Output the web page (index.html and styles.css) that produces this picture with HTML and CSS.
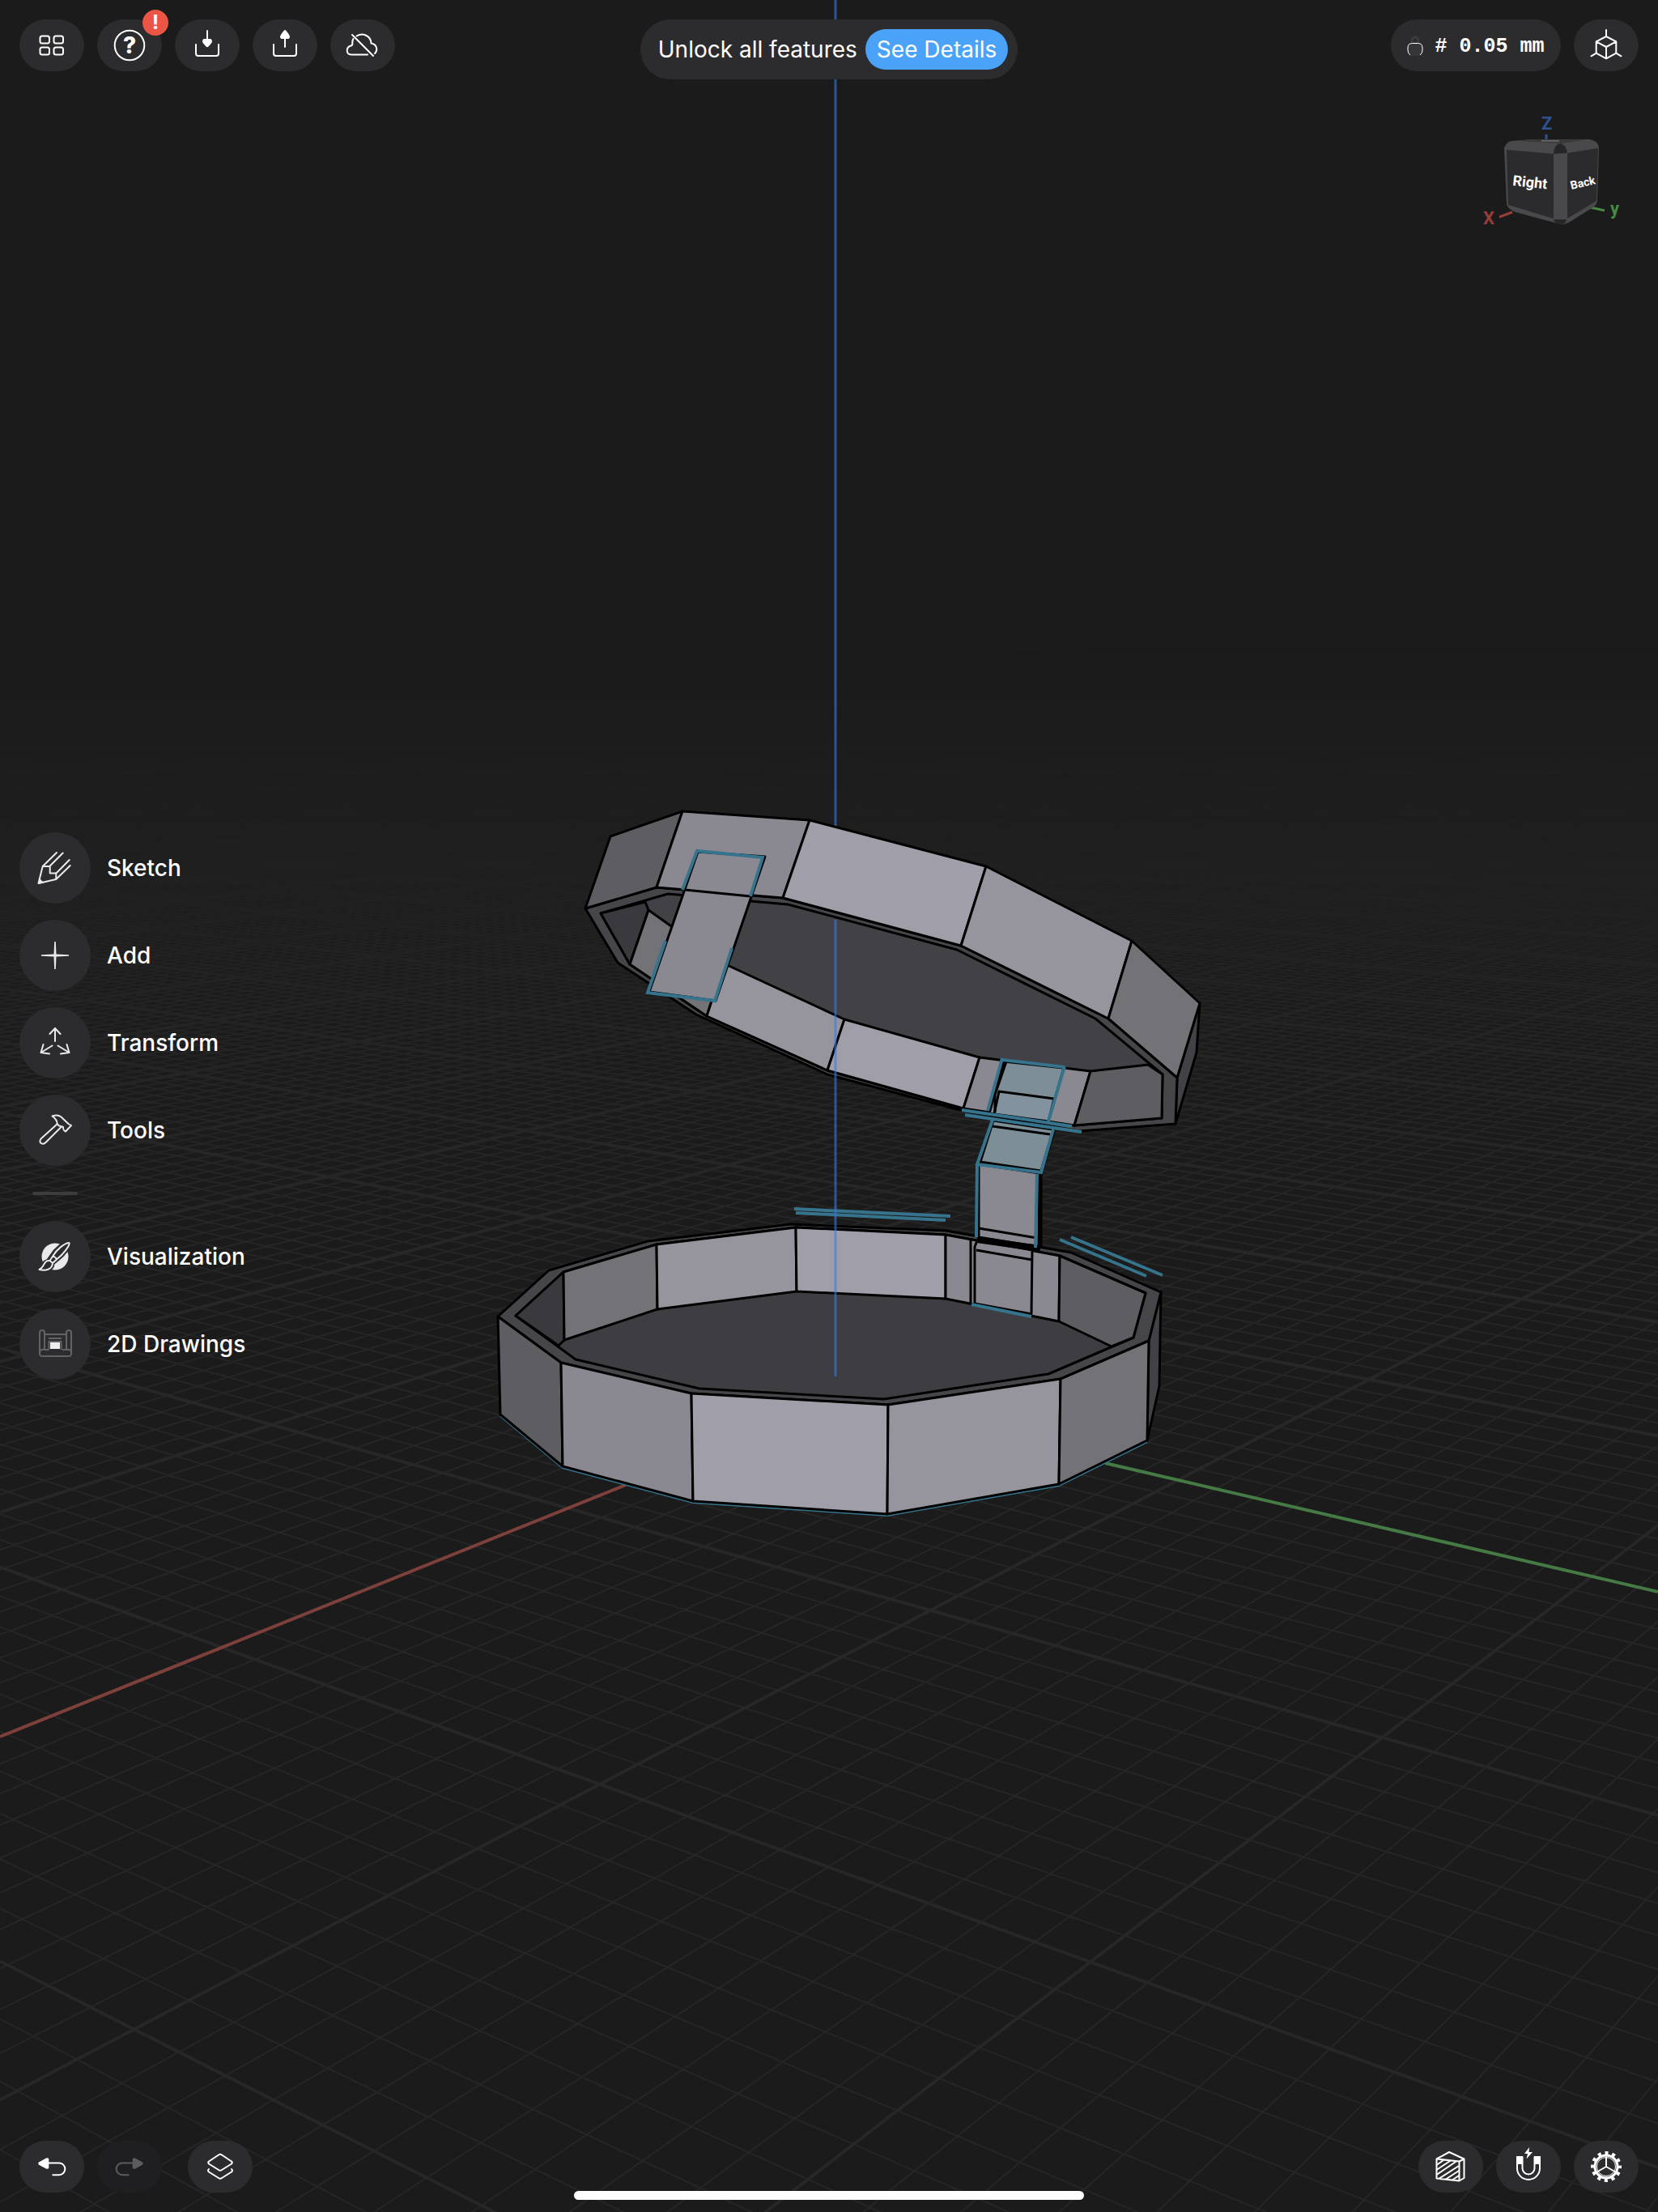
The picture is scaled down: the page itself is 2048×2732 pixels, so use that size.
FILE: index.html
```html
<!DOCTYPE html>
<html lang="en">
<head>
<meta charset="utf-8">
<meta name="viewport" content="width=device-width, initial-scale=1">
<title>3D Modeling Workspace</title>
<link rel="stylesheet" href="styles.css">
</head>
<body>
<main class="workspace">
  <svg class="scene" viewBox="0 0 2048 2732" preserveAspectRatio="xMidYMid slice" role="img" aria-label="Model viewport">
    <defs>
      <linearGradient id="haze" gradientUnits="userSpaceOnUse" x1="0" y1="800" x2="0" y2="1500">
        <stop offset="0" stop-color="#fff" stop-opacity="0"/>
        <stop offset="0.3" stop-color="#fff" stop-opacity=".3"/>
        <stop offset="0.7" stop-color="#fff" stop-opacity=".8"/>
        <stop offset="1" stop-color="#fff"/>
      </linearGradient>
      <mask id="fade" maskUnits="userSpaceOnUse" x="0" y="0" width="2048" height="2732"><rect y="800" width="2048" height="1932" fill="url(#haze)"/></mask>
    </defs>
    <g mask="url(#fade)">
      <path id="grid-minor" class="grid-minor"/>
      <path id="grid-major" class="grid-major"/>
    </g>
    <path class="axis-x" d="M0 2145 773 1834"/>
    <path class="axis-y" d="M1365 1807 2048 1966"/>
    <path class="axis-z" d="M1032 0V1021"/>

    <!-- lid -->
    <g class="edge">
      <path class="f1" d="M1482 1239 1478 1300 1452 1388 1454 1331z"/>
      <path class="rim" d="M723 1122 811 1096 967 1109 1187 1168 1369 1258 1454 1331 1452 1388 1333 1397 1190 1372 1022 1327 860 1253 763 1189z"/>
      <path class="f1" d="M742 1128 825 1104 973 1117 1182 1173 1353 1258 1436 1327 1435 1381 1327 1390 1190 1369 1022 1322 873 1255 778 1191z"/>
      <path class="f0" d="M742 1128 797 1114 801 1124 778 1191z"/>
      <path class="f3" d="M801 1124 894 1190 873 1255 778 1191z"/>
      <path class="f5" d="M894 1190 1043 1259 1022 1322 873 1255z"/>
      <path class="f6" d="M1043 1259 1210 1306 1190 1369 1022 1322z"/>
      <path class="f4" d="M1210 1306 1347 1323 1327 1390 1190 1369z"/>
      <path class="f2" d="M1347 1323 1418 1315 1436 1327 1435 1381 1327 1390z"/>
      <path class="f2" d="M754 1033 843 1002 811 1096 723 1122z"/>
      <path class="f4" d="M843 1002 1000 1013 967 1109 811 1096z"/>
      <path class="f6" d="M1000 1013 1218 1070 1187 1168 967 1109z"/>
      <path class="f5" d="M1218 1070 1398 1162 1369 1258 1187 1168z"/>
      <path class="f3" d="M1398 1162 1482 1239 1454 1331 1369 1258z"/>
      <path class="f4" d="M862 1052 945 1058 884 1236 802 1225z"/>
      <path class="line" d="M846 1099 927 1107"/>
    </g>
    <path class="sketch" d="M843 1099 861 1051 942 1059 927 1107M822 1162 800 1226 883 1236 904 1171"/>

    <!-- base -->
    <path class="sketch-thin" d="M618 1749 695 1813 856 1856 1096 1872 1308 1835 1417 1781"/>
    <g class="edge">
      <path class="f1" d="M1434 1596 1432 1712 1417 1779 1419 1656z"/>
      <path class="rim" d="M615 1626 678 1569 800 1533 977 1512 1168 1520 1323 1547 1434 1596 1419 1656 1311 1703 1097 1735 854 1721 693 1683z"/>
      <path class="floor" d="M637 1625 696 1571 811 1537 983 1516 1168 1525 1309 1551 1415 1597 1400 1652 1295 1697 1092 1728 864 1715 711 1679z"/>
      <path class="f0" d="M637 1625 696 1571 697 1655 690 1662z"/>
      <path class="f3" d="M696 1571 811 1537 812 1617 697 1655z"/>
      <path class="f5" d="M811 1537 983 1516 984 1595 812 1617z"/>
      <path class="f6" d="M983 1516 1168 1525 1168 1604 984 1595z"/>
      <path class="f4" d="M1168 1525 1309 1551 1308 1632 1168 1604z"/>
      <path class="f2" d="M1309 1551 1415 1597 1400 1652 1373 1663 1308 1632z"/>
      <path class="f2" d="M615 1626 693 1683 695 1811 618 1747z"/>
      <path class="f4" d="M693 1683 854 1721 856 1854 695 1811z"/>
      <path class="f6" d="M854 1721 1097 1735 1096 1870 856 1854z"/>
      <path class="f5" d="M1097 1735 1310 1703 1308 1833 1096 1870z"/>
      <path class="f3" d="M1310 1703 1419 1656 1417 1779 1308 1833z"/>
    </g>

    <!-- hinge strap -->
    <g class="edge">
      <path class="line" d="M1199 1530V1611"/>
      <path class="f4" d="M1207 1532 1275 1544 1274 1623 1204 1610 1204 1540z"/>
      <path class="line" d="M1206 1544 1275 1556"/>
      <path class="f4" d="M1209 1438 1284 1449 1283 1540 1209 1528z"/>
      <path class="line" d="M1209 1517 1281 1529"/>
      <path class="strap-shadow" d="M1207 1531 1285 1542"/>
      <path class="strap-side" d="M1285 1448V1541"/>
      <path class="strap-a" d="M1240 1311 1314 1319 1295 1385 1222 1375z"/>
      <path class="strap-b" d="M1234 1348 1302 1357 1295 1385 1228 1376z"/>
      <path class="line" d="M1243 1311 1229 1352V1374"/>
      <path class="strap-a" d="M1227 1384 1301 1395 1286 1446 1211 1435z"/>
      <path class="line" d="M1226 1391 1297 1401M1303 1395 1287 1447"/>
    </g>
    <path class="sketch" d="M1238 1307 1220 1372M1238 1309 1315 1318M1315 1317 1295 1385M1188 1371 1324 1391M1192 1377 1336 1398M1226 1383 1207 1438 1286 1448 1301 1395M1207 1438 1206 1528M1281 1450 1279 1541M1200 1611 1274 1626M981 1493 1174 1502M983 1498 1168 1507M1323 1528 1436 1575M1309 1531 1416 1576"/>
    <path class="axis-z" d="M1032 1136V1700"/>
  </svg>

  <header class="bar top">
    <nav class="group" aria-label="Project">
      <button class="key" aria-label="Projects"><svg viewBox="0 0 80 64"><g class="ico"><rect x="25.500" y="20.500" width="11.500" height="9" rx="2.500"/><rect x="42.500" y="20.500" width="11.500" height="9" rx="2.500"/><rect x="25.500" y="34.500" width="11.500" height="9" rx="2.500"/><rect x="42.500" y="34.500" width="11.500" height="9" rx="2.500"/></g></svg></button>
      <button class="key" aria-label="Help"><svg viewBox="0 0 80 64"><circle class="ico" cx="40" cy="32" r="18.300"/><text class="help" x="40" y="42" text-anchor="middle">?</text></svg><span class="badge">!</span></button>
      <button class="key" aria-label="Import"><svg viewBox="0 0 80 64"><path class="ico" d="M26 31v11q0 3 3 3h22q3 0 3-3V31M40 14v12"/><path class="solid" d="M35.500 24h9q3 3 0 6l-3 3.500q-1.500 1.500-3 0l-3-3.500q-3-3 0-6z"/></svg></button>
      <button class="key" aria-label="Export"><svg viewBox="0 0 80 64"><path class="ico" d="M26 31v11q0 3 3 3h22q3 0 3-3V31M40 34V22"/><path class="solid" d="M35.500 24q-3-2 0-6l3-4q1.500-2 3 0l3 4q3 4 0 6z"/></svg></button>
      <button class="key" aria-label="Offline"><svg viewBox="0 0 80 64"><path class="ico" d="M27 19 53 45M46 43.500H26c-6.500 0-7.500-9-.5-11 2-.5 2-2 1.800-4q0-2.500 1-4.500M32.500 20.500C40 16 50 20 50.500 29.500c7 1 8.500 8 4.500 12.500"/></svg></button>
    </nav>
    <section class="banner"><span>Unlock all features</span><button class="cta">See Details</button></section>
    <nav class="group end" aria-label="View">
      <button class="key snap"><svg class="lock" viewBox="0 0 20 26"><circle cx="10" cy="6" r="4" fill="none" stroke="#3c3c3e" stroke-width="3"/><rect x=".5" y="9" width="19" height="16" rx="6" fill="#363638"/><path d="M4 24Q1 22 1 18v-3q0-5.500 5.500-5.500h7Q19 9.500 19 15v3q0 4-3 6" fill="none" stroke="#fff"/></svg># 0.05 mm</button>
      <button class="key" aria-label="Orientation"><svg viewBox="0 0 80 64"><path class="ico" d="M40 21 52.300 27.300V41.700L40 48.300 27.700 41.700V27.300zM27.700 27.300 40 34l12.300-6.700M40 34V48M40 21V13M27.700 41.700 21.500 45.300M52.300 41.700 58.500 45.300"/></svg></button>
    </nav>
  </header>

  <div class="middle">
    <nav class="tools" aria-label="Tools">
      <button class="tool"><span class="disc"><svg viewBox="0 0 88 88"><path class="ico" d="M46 25 28.700 42 23.500 63 45.300 58 62.700 41M53.700 25.500 37.700 41.500V50.500H45.500L61.700 34M28.700 42h9M45.300 58V50"/><path class="solid" d="M23 64l2-9q1 5 6 7z"/></svg></span>Sketch</button>
      <button class="tool"><span class="disc"><svg viewBox="0 0 88 88"><path class="solid" d="M43.200 27h1.600l.7 15.500L61 43.200v1.600l-15.500.7L44.800 61h-1.600l-.7-15.500L27 44.800v-1.600l15.500-.7z"/></svg></span>Add</button>
      <button class="tool"><span class="disc"><svg viewBox="0 0 88 88"><path class="ico" d="M44 42V26M37.500 33 44 26l6.500 7M40.500 47.500 26.500 56M29.500 46l-3 10 10.500 1.500M47.500 47.500 61.500 56M58.500 46l3 10L51 57.500"/></svg></span>Transform</button>
      <button class="tool"><span class="disc"><svg viewBox="0 0 88 88"><path class="ico" d="M47 36 26.500 54.500c-2 3-1 5 .5 5.500 2 1.500 4 .5 5.500-1L51.500 40M40.500 26.500c4-1.500 8-1.500 11 1L60.500 36l3.500 2-7 7.500c-3-1.500-3-3-3-5.500q-3-1.500-5-1.500L46.500 36q.5-5-6-9.500z"/></svg></span>Tools</button>
      <hr class="rule">
      <button class="tool"><span class="disc"><svg viewBox="0 0 88 88"><circle cx="44" cy="44" r="16.500" fill="#e9e9eb"/><path d="M61.500 27c1 3-7 14-15 20l-6 5c0 8-8 10-16 8 4-1 4-9 11-10l5-7c4-7 15-17 21-16z" fill="#2c2c2e" stroke="#2c2c2e" stroke-width="6"/><path class="ico" d="M61.500 27c1 3-7 14-15 20l-5-4c4-7 14-16 20-16zM41.500 43l-4 6 3.500 3 5.500-5M37.500 49c-8-1-6 8-13 11 8 2 16 0 16.500-8"/></svg></span>Visualization</button>
      <button class="tool"><span class="disc"><svg viewBox="0 0 88 88"><path d="M31 51V30q0-3-3-3t-3 3V56q0 3 4 3H60q4 0 4-3V30q0-3-3-3t-3 3V51M31 32H57M31 51q-6-1-6 4M58 51q6-1 6 4M31 51h5M58 51h-5M36 37H52M36.500 51V41h15V51" fill="none" stroke="#626265" stroke-width="2"/><path d="M38 42H50v8H38z" fill="#eee"/></svg></span>2D Drawings</button>
    </nav>
    <svg class="cube" viewBox="0 0 190 144" role="img" aria-label="View cube: Right, Back">
      <path d="M36 122 20 128" stroke="#963d39" stroke-width="3"/><path d="M132 116 150 120" stroke="#44893f" stroke-width="3"/><path d="M78 26v8" stroke="#2c5291" stroke-width="3"/>
      <path d="M26 43Q29 34 37 34L60 32H131Q143 34 143 43L141 109Q140 113 136 116L107 134Q99 139 92 136L40 122Q30 118 29 112z" fill="#49494b"/>
      <path d="M42 34 62 32H130L98 37z" fill="#39393b"/><path d="M72 34H94" stroke="#8a8a8a" stroke-width="1"/>
      <path d="M29 45 87 50V130L31 113zM104 49 142 43 140 108 104 130z" fill="#2b2b2d"/>
      <path d="M87 50Q88 38 95 37 102 38 104 49zM87 131H103Q102 137 95 137 88 136 87 131z" fill="#262628"/>
      <text class="face" x="36" y="89" transform="rotate(6 36 89)">Right</text>
      <text class="face small" x="109" y="94" transform="rotate(-13 109 94)">Back</text>
      <text class="mark" x="0" y="137" fill="#963d39">X</text><text class="mark" x="72" y="20" fill="#2c5291">Z</text><text class="mark" x="157" y="125" fill="#44893f">y</text>
    </svg>
  </div>

  <footer class="bar bottom">
    <nav class="group" aria-label="History">
      <button class="key" aria-label="Undo"><svg viewBox="0 0 80 64"><path class="ico" d="M35 27.500H49a7.300 7.300 0 0 1 0 14.700H41.300"/><path class="solid" d="M24.500 26.200 33 21.500q3.300-1 3.300 1.500V33q0 2.500-3.300 1.500L24.500 30q-2.500-2 0-3.800z"/></svg></button>
      <button class="key off" aria-label="Redo" disabled><svg viewBox="0 0 80 64"><path class="ico" d="M45 27.500H31a7.300 7.300 0 0 0 0 14.700H38.700"/><path class="solid" d="M55.500 26.200 47 21.500q-3.300-1-3.300 1.500V33q0 2.500 3.300 1.500L55.500 30q2.500-2 0-3.800z"/></svg></button>
      <button class="key layers" aria-label="Items"><svg viewBox="0 0 80 64"><path class="ico" d="M38 17.500q2-1.500 4 0L54 25.500q1.500 1.500 0 3L42 36q-2 1.500-4 0L26 28.500q-1.500-1.500 0-3zM26 35q-2 1.500 0 3.500L38 46q2 1.500 4 0l12-7.500q2-2 0-3.500"/></svg></button>
    </nav>
    <nav class="group end" aria-label="Display">
      <button class="key" aria-label="Section view"><svg viewBox="0 0 80 64"><path class="ico" d="M22.500 22.500 38 14l18.500 8.500V46L50.500 49.500 22.500 46.500zM22.500 22.500 50.500 25.500V49.500M50.500 25.500 56.500 22.500M22.500 30 31 24M22.500 36 39 25M22.500 42 46 26M26 46.500 50 31M34 47.500 50 37M42 48.500 50 43"/></svg></button>
      <button class="key" aria-label="Snapping"><svg viewBox="0 0 80 64"><path class="ico" d="M26 20V34a14 14 0 0 0 28 0V20H47.500V34a7.500 7.500 0 0 1-15 0V20z"/><path class="solid" d="M25 19h8v10H25zM47 19h8v10H47zM41 8l-6 8h4l-1.500 6.500L45 14h-4.500z"/></svg></button>
      <button class="key" aria-label="Settings"><svg viewBox="0 0 80 64"><circle cx="40" cy="32" r="16.500" fill="none" stroke="#fff" stroke-width="5" stroke-dasharray="4 4.639" stroke-dashoffset="2"/><circle cx="40" cy="32" r="14" fill="none" stroke="#fff" stroke-width="3"/><circle cx="40" cy="32" r="11.500" fill="none" stroke="#fff"/><path class="ico" d="M40 32V20M40 32 29.500 38M40 32 50.500 38"/></svg></button>
    </nav>
  </footer>
  <div class="home"></div>
</main>
<script src="grid.js"></script>
</body>
</html>
```

FILE: grid.js
```js
// Ground plane: both line families run from their vanishing points on the horizon.
(function () {
  var horizon = 720, width = 2048;
  var minor = '', major = '';

  function add(n, d) {
    if (n % 10 === 0) { if (n !== 0) major += d; } else { minor += d; }
  }

  for (var n = -400; n <= 34; n++) {
    // parallel to the green axis
    var s = 1011 / (4388 - 79.83 * n);
    add(n, 'M0 ' + (horizon + s * 3356).toFixed(1) + 'L' + width + ' ' + (horizon + s * (3356 + width)).toFixed(1));
  }
  for (var m = -400; m <= 29; m++) {
    // parallel to the red axis
    var t = 1011 / (2529 - 60.74 * m);
    add(m, 'M0 ' + (horizon + t * 3561).toFixed(1) + 'L' + width + ' ' + (horizon + t * (3561 - width)).toFixed(1));
  }
  document.getElementById('grid-minor').setAttribute('d', minor);
  document.getElementById('grid-major').setAttribute('d', major);
})();
```

FILE: styles.css
```css
* { box-sizing: border-box; }

body {
  margin: 0;
  background: #1b1b1b;
  color: #fff;
  font-family: Inter, "Liberation Sans", sans-serif;
  font-size: 28px;
}

button {
  margin: 0;
  padding: 0;
  border: 0;
  background: none;
  color: inherit;
  font: inherit;
  cursor: pointer;
}

svg { display: block; }

.workspace {
  position: relative;
  display: grid;
  grid-template-rows: 98px 1fr 98px;
  min-height: 100vh;
  overflow: hidden;
}

/* viewport */
.scene { position: absolute; inset: 0; width: 100%; height: 100%; }
.scene path { fill: none; }
.scene .grid-minor { stroke: #262626; stroke-width: 2; }
.scene .grid-major { stroke: #272727; stroke-width: 4; }
.axis-x { stroke: #7d403b; stroke-width: 4; }
.axis-y { stroke: #457a44; stroke-width: 4; }
.axis-z { stroke: #3b7ae0; stroke-opacity: .6; stroke-width: 3; }
.edge { stroke: #000; stroke-width: 3; stroke-linejoin: round; }
.scene .f0 { fill: #3a393d; }
.scene .f1 { fill: #424145; }
.scene .f2 { fill: #5e5d62; }
.scene .f3 { fill: #737277; }
.scene .f4 { fill: #8a8991; }
.scene .f5 { fill: #96959e; }
.scene .f6 { fill: #a09fa9; }
.scene .rim { fill: #464549; }
.scene .floor { fill: #3e3d41; }
.scene .strap-a { fill: #7d8e97; }
.scene .strap-b { fill: #82929e; }
.strap-shadow { stroke-width: 8; }
.strap-side { stroke-width: 5; }
.sketch { stroke: #36738d; stroke-width: 4; }
.sketch-thin { stroke: #36738d; stroke-width: 2; }

/* bars */
.bar {
  position: relative;
  display: grid;
  padding: 0 24px;
}
.top { grid-template-columns: 1fr auto 1fr; align-items: start; padding-top: 24px; }
.bottom { grid-template-columns: 1fr 1fr; align-items: end; padding-bottom: 24px; }
.group { display: flex; gap: 16px; }
.end { justify-content: flex-end; }

.key {
  position: relative;
  width: 80px;
  height: 64px;
  border-radius: 32px;
  background: #2c2c2e;
}
.key > svg { width: 100%; height: 100%; }
.off { background: #1f1f21; color: #5c5c5e; }
.layers { margin-left: 16px; }

.ico { fill: none; stroke: currentColor; stroke-width: 2; stroke-linecap: round; stroke-linejoin: round; }
.solid { fill: currentColor; }
.help { fill: #fff; font-size: 28px; font-weight: 800; }

.badge {
  position: absolute;
  top: -12px;
  left: 56px;
  width: 32px;
  border-radius: 50%;
  background: #eb5545;
  font-size: 24px;
  font-weight: 700;
  line-height: 32px;
  text-align: center;
}

.banner {
  display: flex;
  align-items: center;
  gap: 10px;
  height: 74px;
  padding: 0 12px 0 22px;
  border-radius: 37px;
  background: #2c2c2e;
  white-space: nowrap;
}
.cta {
  height: 50px;
  padding: 0 14px;
  border-radius: 25px;
  background: #4aa3f8;
}

.snap {
  display: flex;
  align-items: center;
  justify-content: center;
  gap: 14px;
  width: 210px;
  padding-top: 2px;
  font-family: "Liberation Mono", monospace;
  font-size: 25px;
  font-weight: 700;
  white-space: nowrap;
}
.snap .lock { width: 20px; height: 26px; }

/* side tools and view cube */
.middle {
  position: relative;
  display: flex;
  justify-content: space-between;
  padding: 0 24px;
}
.tools {
  display: flex;
  flex-direction: column;
  align-items: flex-start;
  align-self: center;
  gap: 20px;
}
.tool {
  display: flex;
  align-items: center;
  gap: 20px;
  font-weight: 500;
}
.disc {
  width: 88px;
  height: 88px;
  border-radius: 50%;
  background: #2c2c2e;
  color: #e9e9eb;
}
.rule {
  width: 56px;
  height: 4px;
  margin: 12px 16px;
  border: 0;
  border-radius: 2px;
  background: #3d3d3f;
}
.cube { width: 190px; height: 144px; margin: 42px 2px 0 0; }
.face { fill: #fff; font-family: Roboto, sans-serif; font-size: 18px; font-weight: 700; }
.small { font-size: 14px; }
.mark { font-family: Roboto, sans-serif; font-size: 22px; font-weight: 700; }

.home {
  position: absolute;
  bottom: 15px;
  left: 50%;
  width: 630px;
  max-width: 60%;
  height: 11px;
  border-radius: 6px;
  background: #fff;
  transform: translateX(-50%);
}
```
